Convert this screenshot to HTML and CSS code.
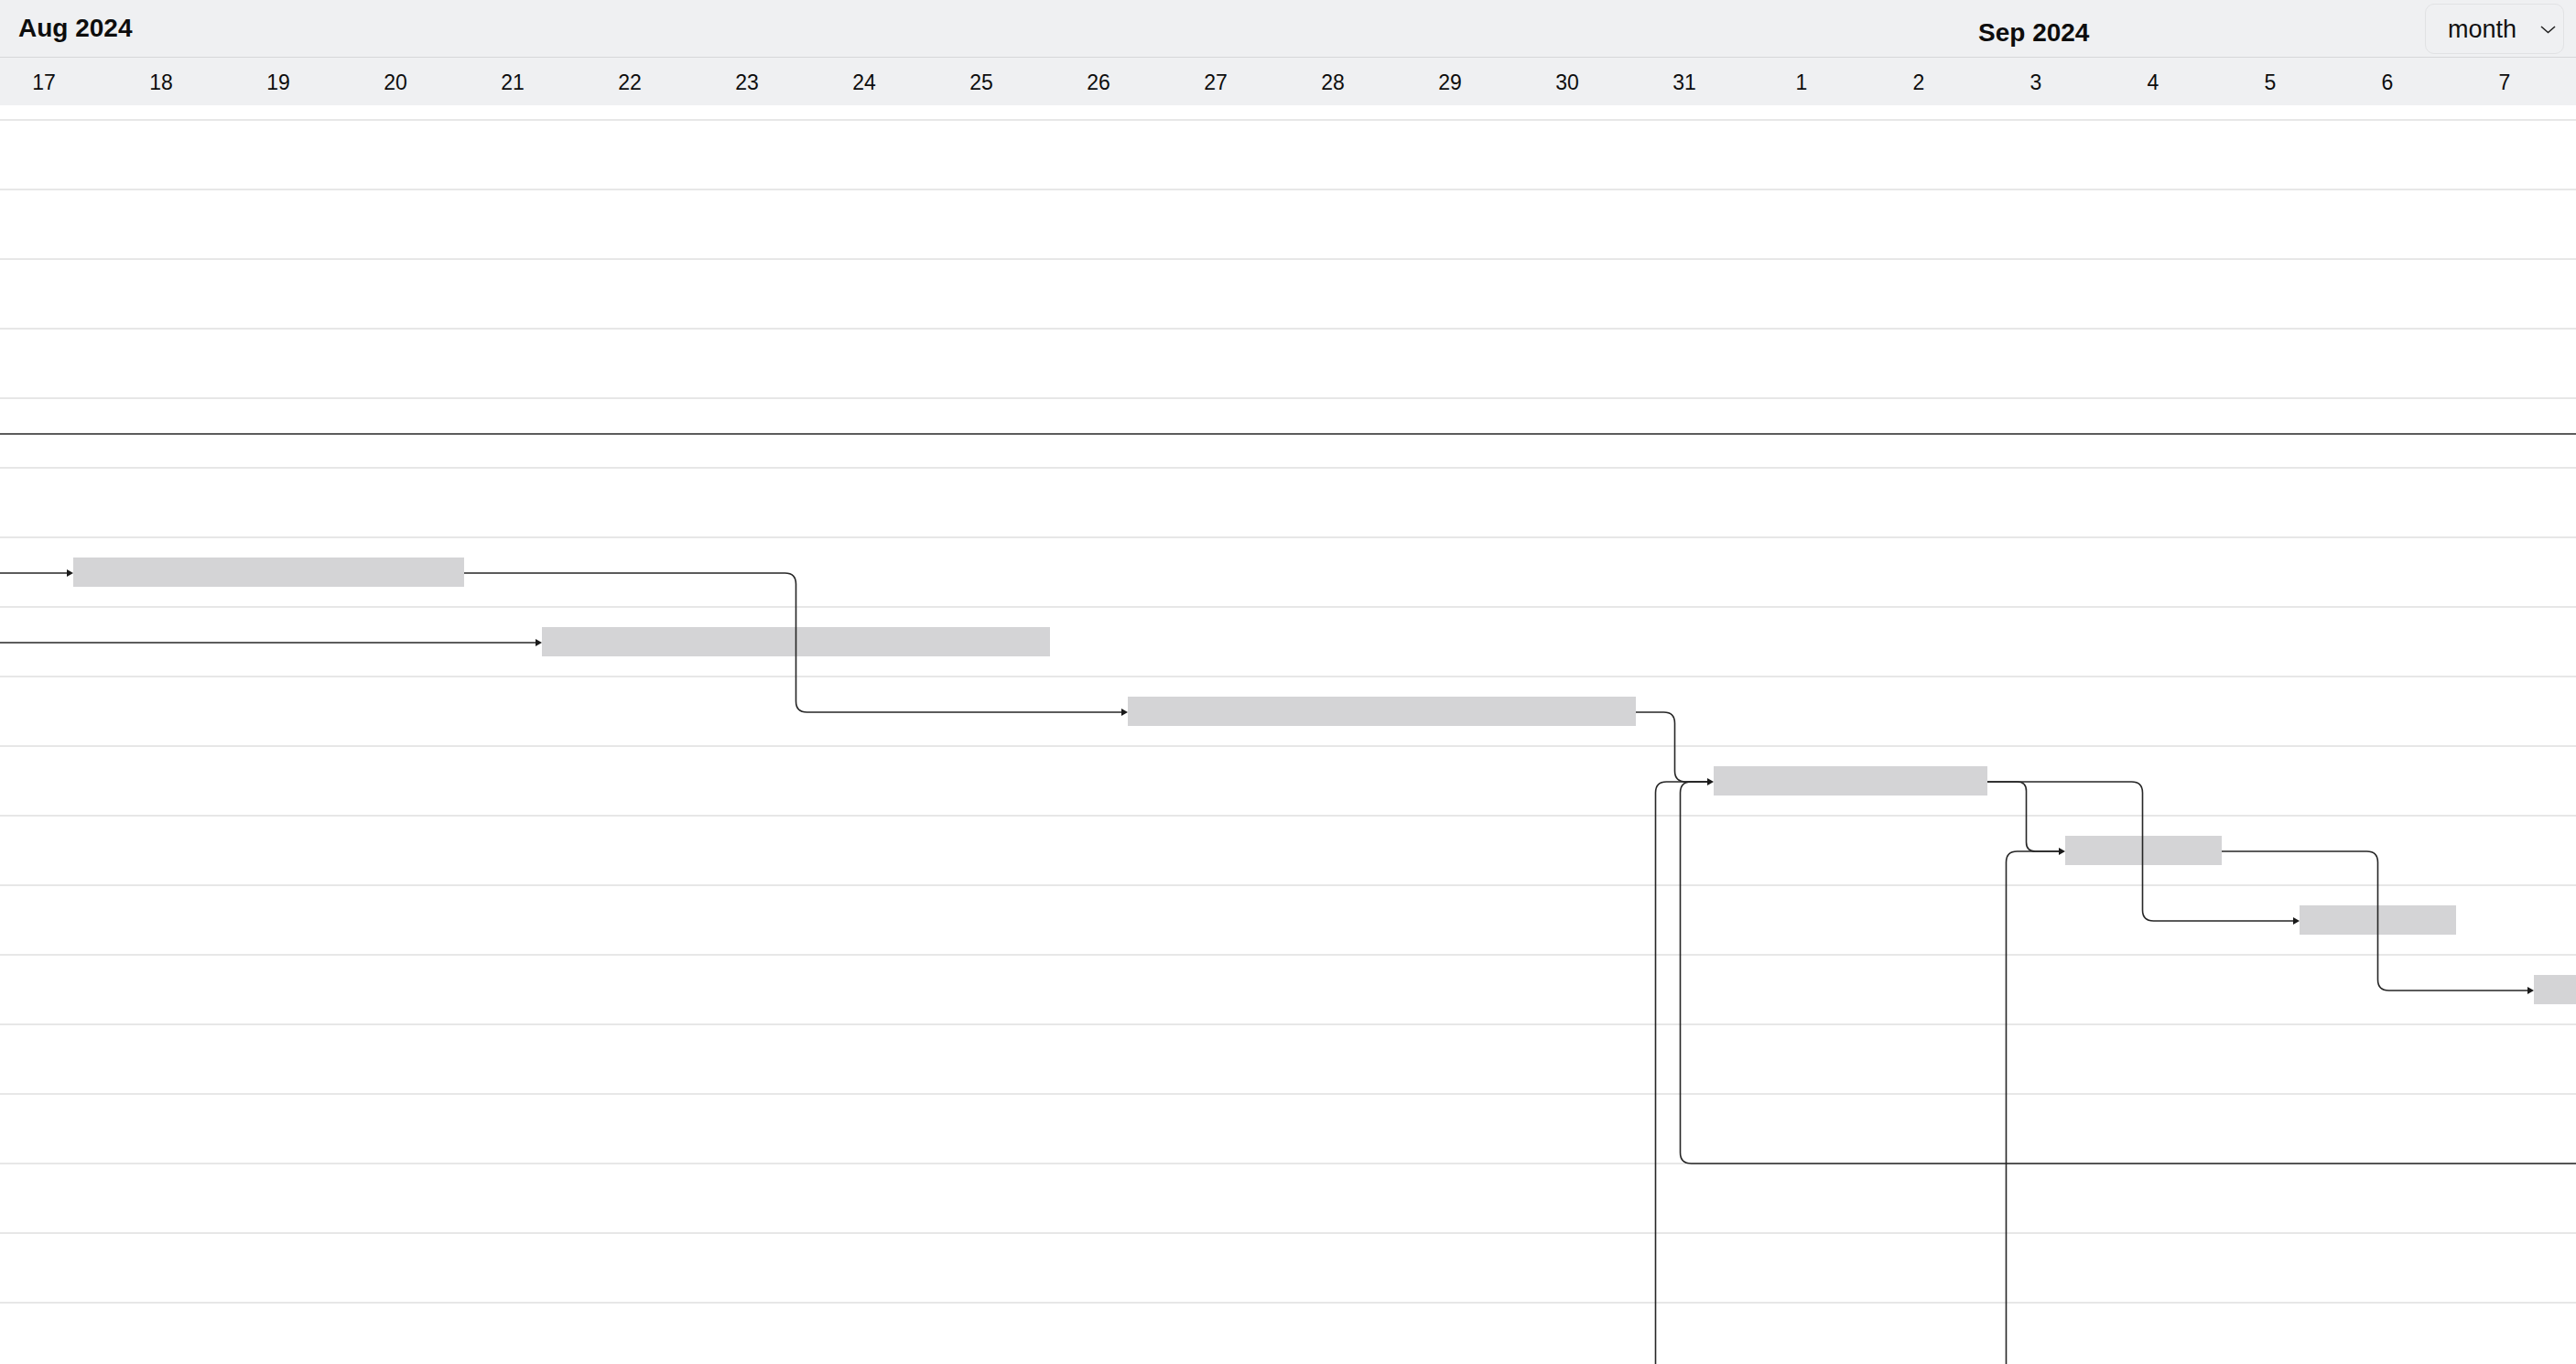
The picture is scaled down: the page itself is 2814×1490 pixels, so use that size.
FILE: index.html
```html
<!DOCTYPE html>
<html lang="en">
<head>
<meta charset="utf-8">
<title>Gantt</title>
<link rel="stylesheet" href="styles.css">
</head>
<body>
<div class="gantt">
  <div class="header">
    <div class="upper">
      <div class="months">
        <span class="month-label aug">Aug 2024</span>
        <span class="month-label sep">Sep 2024</span>
      </div>
      <div class="view-select">
        <span class="view-text">month</span>
        <svg class="chev" width="17" height="10" viewBox="0 0 17 10"><path d="M1 2 L8.5 8.5 L16 2" fill="none" stroke="#222" stroke-width="1.6"/></svg>
      </div>
    </div>
    <div class="days">
      <span>17</span><span>18</span><span>19</span><span>20</span><span>21</span><span>22</span><span>23</span><span>24</span><span>25</span><span>26</span><span>27</span><span>28</span><span>29</span><span>30</span><span>31</span><span>1</span><span>2</span><span>3</span><span>4</span><span>5</span><span>6</span><span>7</span>
    </div>
  </div>
  <div class="grid-body">
    <div class="row partial"></div>
    <div class="row"></div>
    <div class="row"></div>
    <div class="row"></div>
    <div class="row"></div>
    <div class="row"></div>
    <div class="row"></div>
    <div class="row"><div class="bar" style="left:80px;width:427px"></div></div>
    <div class="row"><div class="bar" style="left:592px;width:555px"></div></div>
    <div class="row"><div class="bar" style="left:1232px;width:555px"></div></div>
    <div class="row"><div class="bar" style="left:1872px;width:299px"></div></div>
    <div class="row"><div class="bar" style="left:2256px;width:171px"></div></div>
    <div class="row"><div class="bar" style="left:2512px;width:171px"></div></div>
    <div class="row"><div class="bar" style="left:2768px;width:171px"></div></div>
    <div class="row"></div>
    <div class="row"></div>
    <div class="row"></div>
    <div class="row"></div>
    <div class="row last"></div>
  </div>
  <svg class="arrows" width="2814" height="1490" viewBox="0 0 2814 1490">
    <g class="lines">
      <path d="M0 474 H2814"/>
      <path d="M0 626 H74"/>
      <path d="M0 702 H586"/>
      <path d="M507 626 H857.5 Q869.5 626 869.5 638 V766 Q869.5 778 881.5 778 H1226"/>
      <path d="M1787 778 H1817.5 Q1829.5 778 1829.5 790 V842 Q1829.5 854 1841.5 854 H1866"/>
      <path d="M1808.5 1490 V866 Q1808.5 854 1820.5 854 H1866"/>
      <path d="M2814 1271 H1847.5 Q1835.5 1271 1835.5 1259 V866 Q1835.5 854 1847.5 854 H1866"/>
      <path d="M2171 854 H2203.5 Q2213.5 854 2213.5 864 V920 Q2213.5 930 2223.5 930 H2250"/>
      <path d="M2171 854 H2328.5 Q2340.5 854 2340.5 866 V994 Q2340.5 1006 2352.5 1006 H2506"/>
      <path d="M2191.5 1490 V942 Q2191.5 930 2203.5 930 H2250"/>
      <path d="M2427 930 H2585.5 Q2597.5 930 2597.5 942 V1070 Q2597.5 1082 2609.5 1082 H2762"/>
    </g>
    <g class="heads">
      <path d="M73 622 L80 626 L73 630 Z"/>
      <path d="M585 698 L592 702 L585 706 Z"/>
      <path d="M1225 774 L1232 778 L1225 782 Z"/>
      <path d="M1865 850 L1872 854 L1865 858 Z"/>
      <path d="M2249 926 L2256 930 L2249 934 Z"/>
      <path d="M2505 1002 L2512 1006 L2505 1010 Z"/>
      <path d="M2761 1078 L2768 1082 L2761 1086 Z"/>
    </g>
  </svg>
</div>
</body>
</html>
```

FILE: styles.css
```css
* { box-sizing: border-box; }

html, body {
  margin: 0;
  padding: 0;
  background: #ffffff;
  overflow: hidden;
}

body {
  font-family: "Liberation Sans", Arial, sans-serif;
  color: #0d0d0d;
}

.gantt {
  position: relative;
  width: 100vw;
  height: 100vh;
  overflow: hidden;
  background: #ffffff;
}

.header {
  background: #eff0f2;
}

.upper {
  position: relative;
  height: 63px;
  border-bottom: 1px solid #d6d7d9;
}

.months {
  display: grid;
  grid-template-columns: repeat(22, 128px);
  margin-left: -16px;
  height: 62px;
  align-items: start;
}

.month-label {
  font-size: 28px;
  font-weight: 700;
  line-height: 32px;
  white-space: nowrap;
}

.aug {
  grid-column: 1 / span 2;
  margin-top: 15px;
  padding-left: 36px;
}

.sep {
  grid-column: 18 / span 2;
  margin-top: 20px;
  padding-left: 1px;
}

.view-select {
  position: absolute;
  top: 4px;
  right: 13px;
  width: 152px;
  height: 55px;
  border: 1.5px solid #e1e2e4;
  border-radius: 10px;
  background: #eff0f2;
  display: flex;
  align-items: center;
  padding-left: 24px;
}

.view-text {
  font-size: 27px;
  line-height: 32px;
  color: #111;
}

.chev {
  margin-left: 26px;
  display: block;
}

.days {
  display: grid;
  grid-template-columns: repeat(22, 128px);
  margin-left: -16px;
  height: 52px;
  padding-top: 13px;
}

.days span {
  text-align: center;
  font-size: 23px;
  line-height: 28px;
}

.grid-body {
  display: flex;
  flex-direction: column;
}

.row {
  position: relative;
  height: 76px;
  flex: none;
  border-bottom: 2px solid #e7e7e7;
}

.row.partial {
  height: 17px;
}

.row.last {
  border-bottom: none;
}

.bar {
  position: absolute;
  top: 21px;
  height: 32px;
  background: #d4d4d6;
}

.arrows {
  position: absolute;
  top: 0;
  left: 0;
  pointer-events: none;
}

.arrows .lines path {
  fill: none;
  stroke: #262626;
  stroke-width: 1.6;
}

.arrows .heads path {
  fill: #1a1a1a;
  stroke: none;
}
```
